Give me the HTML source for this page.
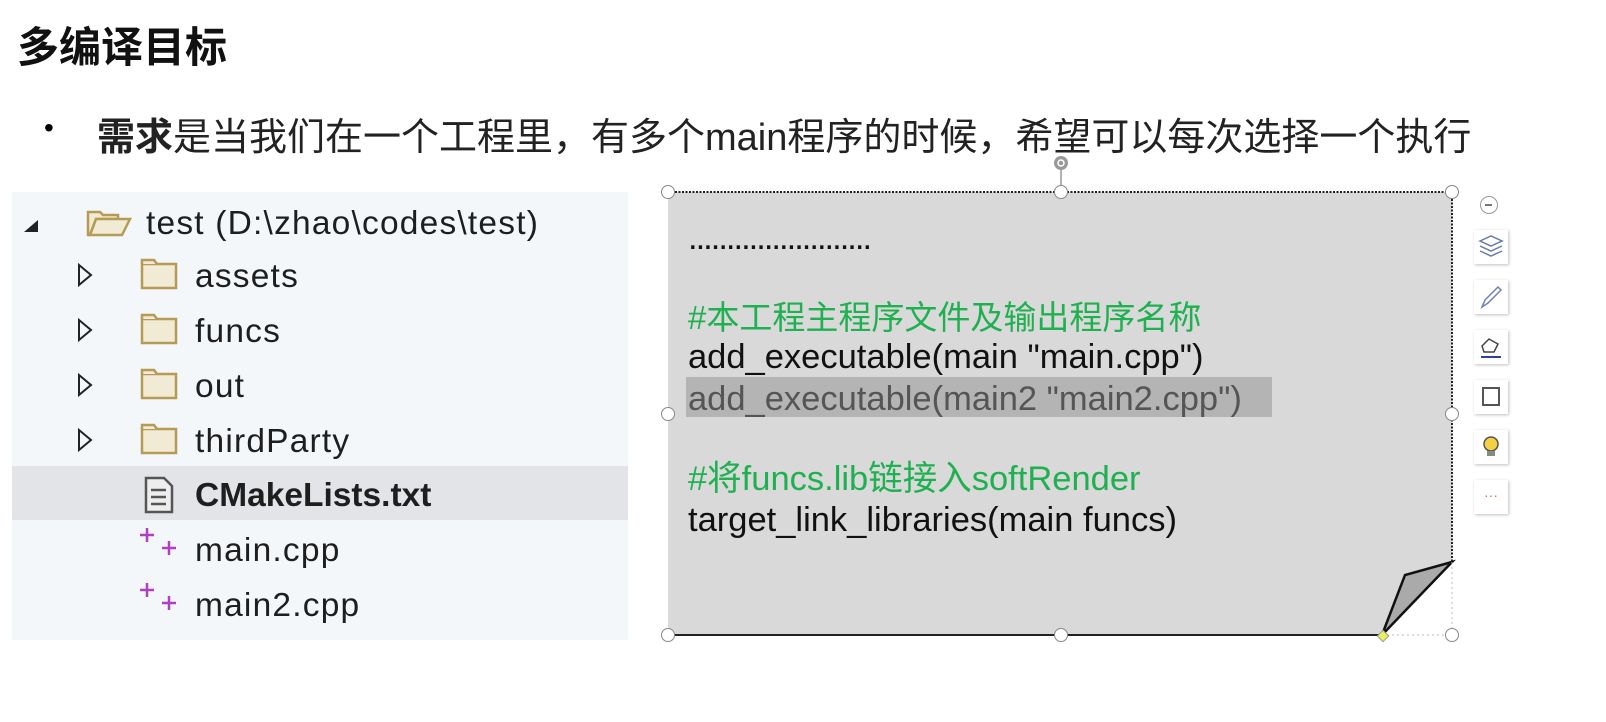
<!DOCTYPE html>
<html><head><meta charset="utf-8"><style>
body{margin:0;width:1606px;height:722px;background:#fff;position:relative;overflow:hidden;font-family:"Liberation Sans","Noto Sans CJK SC",sans-serif;}
.a{position:absolute;white-space:nowrap;}
.panel{position:absolute;left:12px;top:192px;width:616px;height:448px;background:#f4f7fa;}
.row{position:absolute;font-size:33.5px;letter-spacing:1.2px;color:#1e1e1e;line-height:40px;}
.code{font-size:34.5px;line-height:40px;color:#111;}
.h{position:absolute;width:14px;height:14px;border:1.5px solid #888;border-radius:50%;background:#fff;box-sizing:border-box;}
.tb{position:absolute;left:1474px;width:34px;height:34px;background:#fff;box-shadow:1px 1px 3px rgba(0,0,0,.25);}
</style></head><body>
<div class="a" style="left:17px;top:14px;font-size:42px;font-weight:bold;color:#111;">多编译目标</div>
<div class="a" style="left:44px;top:112px;font-size:28px;">•</div>
<div class="a" style="left:97px;top:106px;font-size:38px;color:#222;"><b>需求</b>是当我们在一个工程里，有多个main程序的时候，希望可以每次选择一个执行</div>

<div class="panel"></div>
<div class="a" style="left:12px;top:466px;width:616px;height:54px;background:#e2e4e8;"></div>
<svg class="a" style="left:0;top:192px" width="640" height="450">
 <polygon points="24,40 38,28 38,40" fill="#222"/>
 <g fill="none" stroke="#222" stroke-width="2">
  <polygon points="79,73 91,83 79,93"/><polygon points="79,128 91,138 79,148"/>
  <polygon points="79,183 91,193 79,203"/><polygon points="79,238 91,248 79,258"/>
 </g>
 <g fill="#f1ead4" stroke="#b59b55" stroke-width="2.5">
  <path d="M88,43 V20 H100 L103,23 H118 V27 H96 L90,43 Z"/><path d="M90,43 L96,27 H130 L122,43 Z"/>
  <rect x="142" y="72" width="34" height="24"/><path d="M142,72 v-4 h12 l3,4"/>
  <rect x="142" y="127" width="34" height="24"/><path d="M142,127 v-4 h12 l3,4"/>
  <rect x="142" y="182" width="34" height="24"/><path d="M142,182 v-4 h12 l3,4"/>
  <rect x="142" y="237" width="34" height="24"/><path d="M142,237 v-4 h12 l3,4"/>
 </g>
 <path d="M146,286 h18 l8,8 v26 h-26 z" fill="#eee" stroke="#555" stroke-width="2.5"/>
 <g stroke="#555" stroke-width="2.5"><line x1="151" y1="298" x2="166" y2="298"/><line x1="151" y1="305" x2="166" y2="305"/><line x1="151" y1="312" x2="166" y2="312"/></g>
 <g stroke="#b040c0" stroke-width="2.5">
  <line x1="140" y1="343" x2="154" y2="343"/><line x1="147" y1="336" x2="147" y2="350"/>
  <line x1="162" y1="356" x2="176" y2="356"/><line x1="169" y1="349" x2="169" y2="363"/>
  <line x1="140" y1="398" x2="154" y2="398"/><line x1="147" y1="391" x2="147" y2="405"/>
  <line x1="162" y1="411" x2="176" y2="411"/><line x1="169" y1="404" x2="169" y2="418"/>
 </g>
</svg>
<div class="a row" style="left:146px;top:204px;">test (D:\zhao\codes\test)</div>
<div class="a row" style="left:195px;top:257px;">assets</div>
<div class="a row" style="left:195px;top:312px;">funcs</div>
<div class="a row" style="left:195px;top:367px;">out</div>
<div class="a row" style="left:195px;top:422px;">thirdParty</div>
<div class="a row" style="left:195px;top:476px;font-weight:bold;letter-spacing:0;">CMakeLists.txt</div>
<div class="a row" style="left:195px;top:531px;">main.cpp</div>
<div class="a row" style="left:195px;top:586px;">main2.cpp</div>

<svg class="a" style="left:660px;top:150px" width="810" height="500">
 <path d="M8,42 H792 V412 L722,485 H8 Z" fill="#d9d9d9"/>
 <path d="M8,42 H792 V412 M722,485 H8 Z" fill="none" stroke="#222" stroke-width="2" stroke-dasharray="2,1.5"/>
 <path d="M792,412 L745,425 L722,485 Z" fill="#aaa" stroke="#111" stroke-width="2.5"/>
 <line x1="792" y1="412" x2="792" y2="485" stroke="#bbb" stroke-dasharray="2,3"/>
 <line x1="722" y1="485" x2="792" y2="485" stroke="#bbb" stroke-dasharray="2,3"/>
 <line x1="401" y1="20" x2="401" y2="42" stroke="#999" stroke-width="1.5"/>
 <circle cx="401" cy="13" r="7" fill="#999"/><circle cx="401" cy="13" r="3" fill="none" stroke="#fff" stroke-width="1.5"/>
 <rect x="719" y="482" width="8" height="8" fill="#e8f060" stroke="#999" transform="rotate(45 723 486)"/>
</svg>
<div class="h" style="left:661px;top:185px"></div><div class="h" style="left:1054px;top:185px"></div><div class="h" style="left:1445px;top:185px"></div>
<div class="h" style="left:661px;top:407px"></div><div class="h" style="left:1445px;top:407px"></div>
<div class="h" style="left:661px;top:628px"></div><div class="h" style="left:1054px;top:628px"></div><div class="h" style="left:1445px;top:628px"></div>

<div class="a code" style="left:688px;top:218px;letter-spacing:-2px;">........................</div>
<div class="a code" style="left:688px;top:298px;color:#1fb050;font-size:33px;">#本工程主程序文件及输出程序名称</div>
<div class="a code" style="left:688px;top:337px;">add_executable(main "main.cpp")</div>
<div class="a" style="left:686px;top:377px;width:586px;height:40px;background:#b4b4b4;"></div>
<div class="a code" style="left:688px;top:379px;color:#555;">add_executable(main2 "main2.cpp")</div>
<div class="a code" style="left:688px;top:459px;color:#1fb050;">#将funcs.lib链接入softRender</div>
<div class="a code" style="left:688px;top:500px;">target_link_libraries(main funcs)</div>

<div class="a" style="left:1480px;top:196px;width:18px;height:18px;border:1.5px solid #999;border-radius:50%;box-sizing:border-box;"><div style="position:absolute;left:4px;top:7px;width:7px;height:1.5px;background:#777"></div></div>
<div class="tb" style="top:230px"><svg width="34" height="34"><g fill="none" stroke="#6a7aa8" stroke-width="1.5"><path d="M6,11 L17,6 L28,11 L17,16 Z"/><path d="M6,16 L17,21 L28,16"/><path d="M6,21 L17,26 L28,21"/></g></svg></div>
<div class="tb" style="top:280px"><svg width="34" height="34"><path d="M8,27 L11,20 L24,7 L27,10 L14,23 Z" fill="none" stroke="#7080b8" stroke-width="1.5"/></svg></div>
<div class="tb" style="top:330px"><svg width="34" height="34"><path d="M8,16 L15,9 L24,14 L20,22 H10 Z" fill="none" stroke="#444" stroke-width="1.5"/><line x1="7" y1="27" x2="27" y2="27" stroke="#3040a0" stroke-width="2"/></svg></div>
<div class="tb" style="top:380px"><svg width="34" height="34"><rect x="9" y="8" width="16" height="17" fill="none" stroke="#555" stroke-width="2"/></svg></div>
<div class="tb" style="top:430px"><svg width="34" height="34"><circle cx="17" cy="14" r="7" fill="#f5d040" stroke="#555" stroke-width="1.5"/><rect x="13" y="21" width="8" height="5" fill="#888"/></svg></div>
<div class="tb" style="top:480px;color:#d07050;font-size:14px;text-align:center;line-height:30px;">···</div>
</body></html>
